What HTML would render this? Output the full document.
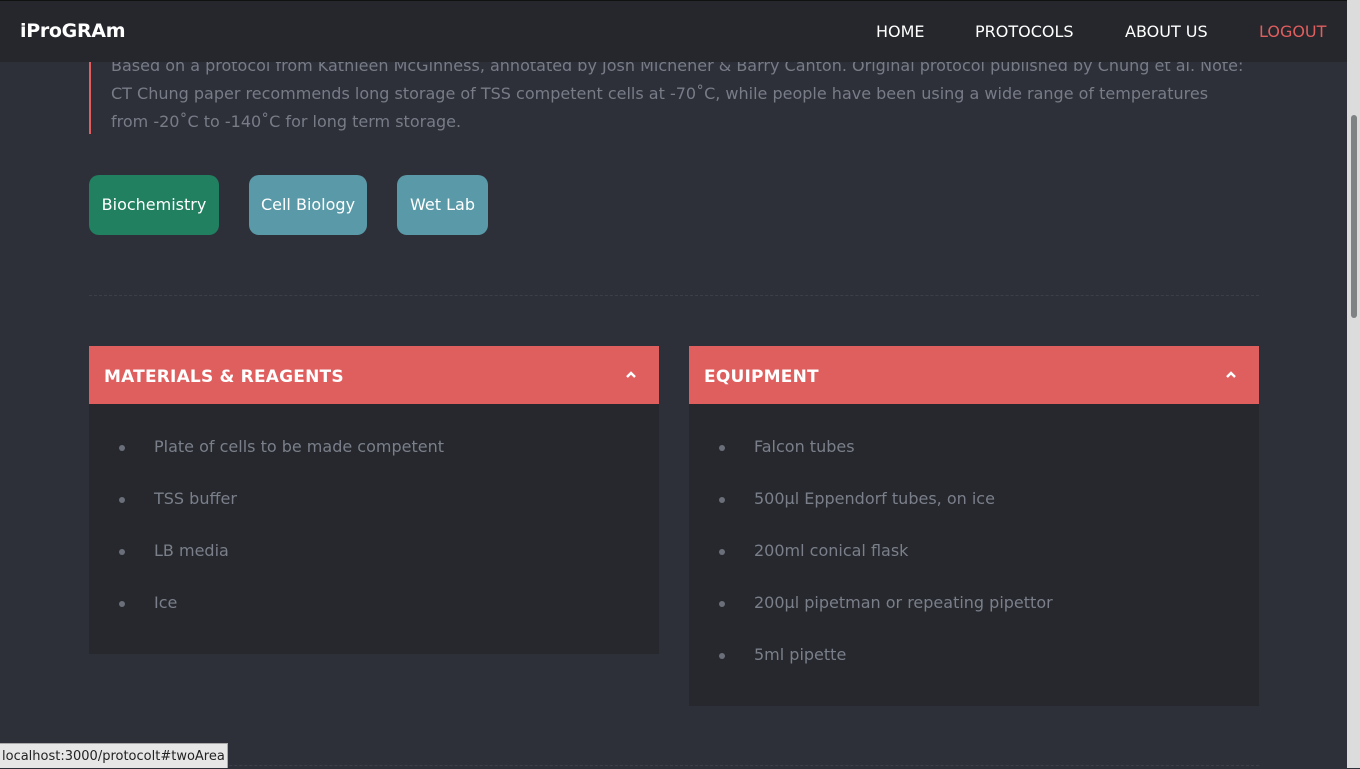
<!DOCTYPE html>
<html><head><meta charset="utf-8"><style>
*{margin:0;padding:0;box-sizing:border-box}
html,body{width:1360px;height:768px;overflow:hidden;background:#2e3039;font-family:"DejaVu Sans","Liberation Sans",sans-serif}
.nav{position:absolute;left:0;top:0;width:1347px;height:62px;background:#25272c;border-top:1px solid #111}
.logo{position:absolute;left:20px;top:19px;color:#fff;font-weight:bold;font-size:19px;letter-spacing:-0.3px}
.nav a{position:absolute;top:21px;color:#fff;font-size:16px;text-decoration:none}
.quote{position:absolute;left:89px;top:50px;width:1160px;border-left:2px solid #df5e5e;padding-left:20px;color:#777c87;font-size:16px;line-height:28px;height:84px;overflow:hidden}
.tag{position:absolute;top:175px;height:60px;border-radius:10px;color:#fff;font-size:16px;line-height:60px;text-align:center}
.hr{position:absolute;left:89px;top:295px;width:1170px;border-top:1px dashed #3c3f49}
.panel{position:absolute;top:346px;width:570px;background:#26282d}
.ph{height:58px;background:#df5e5e;color:#fff;font-weight:bold;font-size:17px;line-height:58px;padding-top:2px;padding-left:15px;position:relative;letter-spacing:0.2px}
.ph svg{position:absolute;right:22px;top:24px}
.panel ul{list-style:none;padding:27px 0 15px 0}
.panel li{height:52px;line-height:32px;color:#7a7f8a;font-size:16px;padding-left:65px;position:relative}
.panel li:before{content:"";position:absolute;left:30px;top:14px;width:6px;height:6px;border-radius:50%;background:#6a6f79}
.sb{position:absolute;left:1347px;top:0;width:13px;height:768px;background:#dcdcdc}
.th{position:absolute;left:1351px;top:115px;width:6px;height:203px;background:#7e8283;border-radius:3px}
.status{position:absolute;left:0;top:743px;height:25px;padding:0 2px;background:#e6e6e6;border:1px solid #aaa;border-left:0;border-bottom:0;color:#222;font-size:13px;line-height:25px}
</style></head><body>
<div class="quote"><div style="margin-top:2px">Based on a protocol from Kathleen McGinness, annotated by Josh Michener &amp; Barry Canton. Original protocol published by Chung et al. Note: CT Chung paper recommends long storage of TSS competent cells at -70˚C, while people have been using a wide range of temperatures from -20˚C to -140˚C for long term storage.</div></div>
<div class="nav">
<div class="logo">iProGRAm</div>
<a style="left:876px">HOME</a>
<a style="left:975px">PROTOCOLS</a>
<a style="left:1125px">ABOUT US</a>
<a style="left:1259px;color:#df5e5e">LOGOUT</a>
</div>
<div class="tag" style="left:89px;width:130px;background:#20805f">Biochemistry</div>
<div class="tag" style="left:249px;width:118px;background:#5a9aa8">Cell Biology</div>
<div class="tag" style="left:397px;width:91px;background:#5a9aa8">Wet Lab</div>
<div class="hr"></div>
<div class="panel" style="left:89px"><div class="ph">MATERIALS &amp; REAGENTS<svg width="12" height="9" viewBox="0 0 12 9"><path d="M2 7 L6 3 L10 7" stroke="#fff" stroke-width="2.4" fill="none"/></svg></div>
<ul><li>Plate of cells to be made competent</li><li>TSS buffer</li><li>LB media</li><li>Ice</li></ul></div>
<div class="panel" style="left:689px"><div class="ph">EQUIPMENT<svg width="12" height="9" viewBox="0 0 12 9"><path d="M2 7 L6 3 L10 7" stroke="#fff" stroke-width="2.4" fill="none"/></svg></div>
<ul><li>Falcon tubes</li><li>500µl Eppendorf tubes, on ice</li><li>200ml conical flask</li><li>200µl pipetman or repeating pipettor</li><li>5ml pipette</li></ul></div>
<div class="hr" style="top:765px"></div>
<div class="sb"></div><div class="th"></div>
<div class="status">localhost:3000/protocolt#twoArea</div>
</body></html>
